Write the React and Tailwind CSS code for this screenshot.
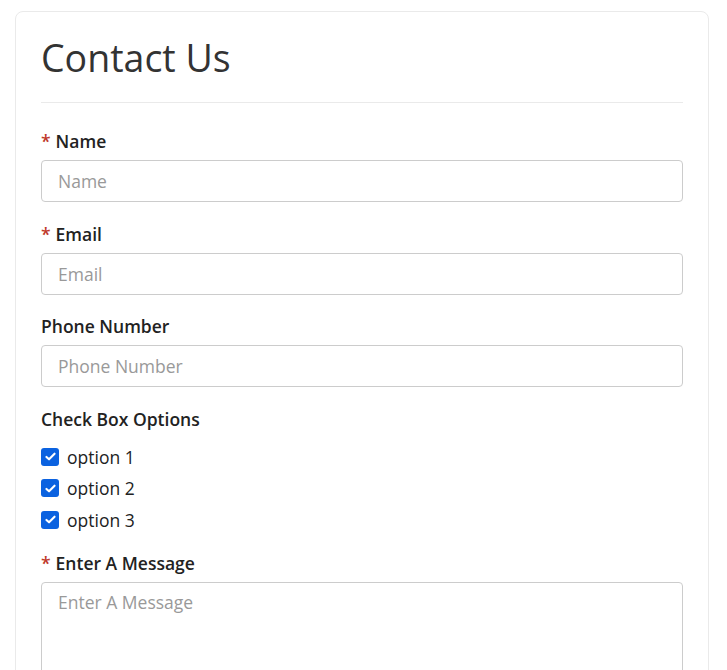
import React from 'react';

const Label = ({ children, required }) => (
    <label className="block text-[17.5px] font-semibold text-[#222] leading-[24px] mb-[7px]">
        {required && <span className="text-[#c0392b] mr-[5px]">*</span>}
        {children}
    </label>
);

const Field = ({ label, required, last }) => (
    <div className={last ? 'mb-[19px]' : 'mb-[20px]'}>
        <Label required={required}>{label}</Label>
        <input
            type="text"
            placeholder={label}
            className="w-full h-[42px] border border-[#ccc] rounded-[4px] px-[16px] text-[17.5px] text-[#333] placeholder:text-[#999] bg-white focus:outline-none"
        />
    </div>
);

const Check = ({ label }) => (
    <label className="flex items-center h-[31.5px] text-[17.5px] text-[#222]">
        <span className="w-[18px] h-[18px] rounded-[3px] bg-[#0b62e0] flex items-center justify-center mr-[8px]">
            <svg width="13" height="13" viewBox="0 0 16 16" fill="none">
                <path d="M3 8.5l3.2 3L13 4.5" stroke="white" strokeWidth="2.6" strokeLinecap="round" strokeLinejoin="round" />
            </svg>
        </span>
        {label}
    </label>
);

export default function App() {
    return (
        <div className="h-[670px] overflow-hidden bg-white pt-[11px] pl-[15px] pr-[18px]" style={{ fontFamily: '"Open Sans", sans-serif' }}>
            <div className="border border-[#eaeaea] rounded-[8px] px-[25px] pt-[21px] h-[700px]">
                <h1 className="text-[37.5px] font-normal text-[#333] leading-[50px]">Contact Us</h1>
                <hr className="border-0 border-t border-[#eaeaea] mt-[19px] mb-[26px]" />
                <Field label="Name" required />
                <Field label="Email" required last />
                <Field label="Phone Number" />
                <div className="mb-[15px]">
                    <Label>Check Box Options</Label>
                    <div className="pt-[3px]">
                        <Check label="option 1" />
                        <Check label="option 2" />
                        <Check label="option 3" />
                    </div>
                </div>
                <div>
                    <Label required>Enter A Message</Label>
                    <textarea
                        placeholder="Enter A Message"
                        className="w-full h-[150px] border border-[#ccc] rounded-[4px] px-[16px] py-[6px] text-[17.5px] text-[#333] placeholder:text-[#999] resize-none focus:outline-none"
                    />
                </div>
            </div>
        </div>
    );
}
